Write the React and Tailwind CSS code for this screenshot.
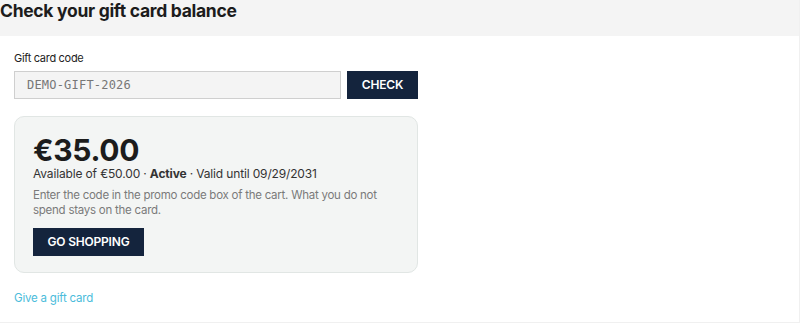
export default function App() {
  return (
    <div className="min-h-screen bg-white" style={{ fontFamily: 'Inter, "Noto Sans", sans-serif' }}>
      <div className="w-[800px] h-[323px] border-r border-b border-[#f0f0f0]">
        <div className="h-[36px] bg-[#f4f4f4] flex items-start">
          <h1 className="text-[17.5px] font-bold leading-[22px] text-[#1c1c1c] tracking-[-0.3px]">Check your gift card balance</h1>
        </div>

        <div className="px-[14px] pt-[15px]">
          <label className="block text-[11px] leading-[14px] text-[#222] tracking-[-0.3px]">Gift card code</label>
          <div className="mt-[6px] flex gap-[6px]">
            <input
              readOnly
              value="DEMO-GIFT-2026"
              className="w-[327px] h-[28px] border border-[#cfcfcf] bg-[#f4f4f4] px-[12px] text-[12px] text-[#777] tracking-[0.2px] outline-none"
              style={{ fontFamily: '"DejaVu Sans Mono", monospace' }}
            />
            <button type="button" className="w-[71px] h-[28px] bg-[#14243d] text-white text-[12px] font-semibold tracking-[-0.2px]">
              CHECK
            </button>
          </div>

          <div className="mt-[17px] w-[404px] rounded-[10px] border border-[#e1e6e4] bg-[#f3f5f4] px-[18px] pt-[18px] pb-[16px]">
            <p className="text-[30px] font-bold leading-[30px] text-[#1c1c1c] tracking-[-0.3px]">€35.00</p>
            <p className="mt-[1px] text-[12px] leading-[16px] text-[#333] tracking-[-0.15px]">
              Available of €50.00 · <span className="font-bold">Active</span> · Valid until 09/29/2031
            </p>
            <p className="mt-[6px] text-[11.5px] leading-[15px] text-[#7a7a7a] tracking-[-0.25px]">
              Enter the code in the promo code box of the cart. What you do not spend stays on the card.
            </p>
            <button type="button" className="mt-[10px] w-[111px] h-[28px] bg-[#14243d] text-white text-[12px] font-semibold tracking-[-0.2px]">
              GO SHOPPING
            </button>
          </div>

          <a href="#" className="mt-[17px] block text-[11.5px] leading-[16px] text-[#4bbcdb] tracking-[-0.2px]">Give a gift card</a>
        </div>
      </div>
    </div>
  )
}
